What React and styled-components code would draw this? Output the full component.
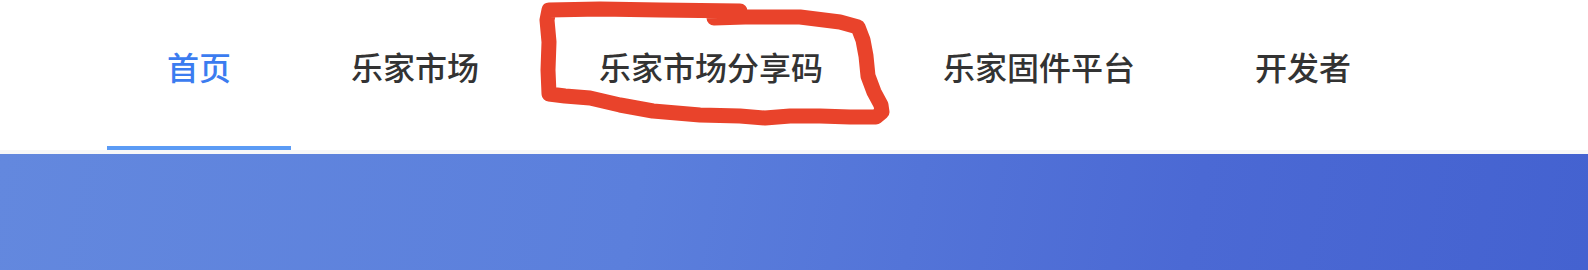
import React from "react";
import styled, { createGlobalStyle } from "styled-components";

const GlobalStyle = createGlobalStyle`
  html, body {
    margin: 0;
    padding: 0;
    background: #ffffff;
    font-family: "Noto Sans CJK SC", "Noto Sans", sans-serif;
  }
`;

const Page = styled.div`
  position: relative;
  width: 1588px;
  height: 270px;
  overflow: hidden;
  display: flex;
  flex-direction: column;
`;

const NavBar = styled.nav`
  display: flex;
  flex-direction: row;
  height: 150px;
  padding-left: 107px;
  background: #ffffff;
  border-bottom: 4px solid #f7f7f8;
`;

const Tab = styled.div`
  position: relative;
  display: flex;
  flex-direction: column;
  align-items: center;
  padding: 50px 60px 0;
  cursor: pointer;
`;

const TabLabel = styled.span`
  font-size: 32px;
  line-height: 32px;
  font-weight: 500;
  white-space: nowrap;
  color: ${(p) => (p.$active ? "#3b7cf0" : "#333333")};
`;

const Underline = styled.div`
  position: absolute;
  left: 0;
  right: 0;
  bottom: 0;
  height: 4px;
  background: #5b9bf5;
`;

const Banner = styled.section`
  flex: 1;
  background: linear-gradient(100deg, #6388de 0%, #5b7fdc 40%, #4b69d4 75%, #4462d0 100%);
`;

const Scribble = styled.svg`
  position: absolute;
  left: 0;
  top: 0;
  pointer-events: none;
`;

const tabs = ["首页", "乐家市场", "乐家市场分享码", "乐家固件平台", "开发者"];

// hand-drawn marker loop around the third tab
const loop = [
  "M 549 94 L 548 70 L 549 42 L 547 20 L 549 10 L 600 9 L 660 10 L 740 11",
  "M 714 18 L 745 17 L 800 17 L 840 22 L 858 27 L 863 40 L 866 56 L 868 76",
  "L 874 92 L 881 105 L 882 112 L 876 117 L 850 117 L 820 116 L 790 116",
  "L 765 118 L 740 116 L 700 115 L 653 111 L 620 105 L 590 98 L 565 96 L 549 94",
].join(" ");

export default function App() {
  return (
    <>
      <GlobalStyle />
      <Page>
        <NavBar>
          {tabs.map((t, i) => (
            <Tab key={t}>
              <TabLabel $active={i === 0}>{t}</TabLabel>
              {i === 0 && <Underline />}
            </Tab>
          ))}
        </NavBar>
        <Banner />
        <Scribble width="1588" height="270" viewBox="0 0 1588 270">
          <path
            d={loop}
            fill="none"
            stroke="#e9432b"
            strokeWidth="15"
            strokeLinecap="round"
            strokeLinejoin="round"
          />
        </Scribble>
      </Page>
    </>
  );
}
